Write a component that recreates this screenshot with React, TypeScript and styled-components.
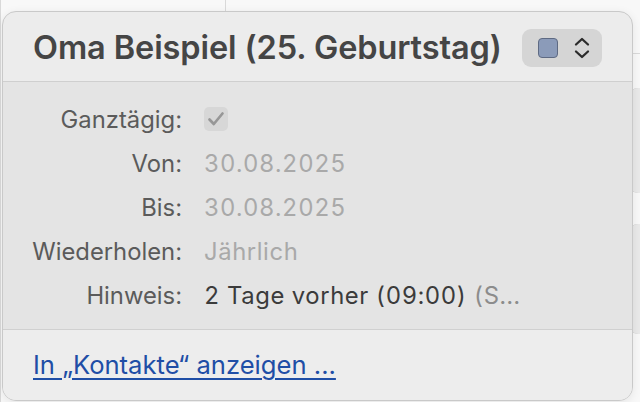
import React from "react";
import styled, { createGlobalStyle } from "styled-components";

const GlobalStyle = createGlobalStyle`
  html, body {
    margin: 0;
    padding: 0;
    background: #f7f7f7;
  }
  * {
    box-sizing: border-box;
  }
`;

const Stage = styled.div`
  position: relative;
  width: 640px;
  height: 402px;
  overflow: hidden;
  background: #f8f8f8;
  font-family: Inter, "Noto Sans", sans-serif;
`;

// calendar grid peeking out behind the popover
const GridLine = styled.div<{ $vertical?: boolean }>`
  position: absolute;
  background: #d9d9d9;
  ${(p) => (p.$vertical ? "width: 1px;" : "height: 1px;")}
`;

const EventBlock = styled.div<{ $tone: string }>`
  position: absolute;
  left: 628px;
  width: 30px;
  border-radius: 10px;
  background: ${(p) => p.$tone};
  border-left: 1px solid #c2c2c2;
`;

const Popover = styled.div`
  position: absolute;
  left: 2px;
  top: 11px;
  width: 631px;
  height: 390px;
  border: 1px solid #c9c9c9;
  border-radius: 14px;
  overflow: hidden;
  display: flex;
  flex-direction: column;
  background: #ececec;
  box-shadow: 0 2px 10px rgba(0, 0, 0, 0.08);
`;

const Header = styled.div`
  height: 70px;
  flex-shrink: 0;
  display: flex;
  align-items: center;
  justify-content: space-between;
  padding: 2px 30px 0 30px;
  border-bottom: 1px solid #cfcfcf;
`;

const Title = styled.h1`
  margin: 0;
  font-size: 32.5px;
  font-weight: 600;
  color: #454545;
  letter-spacing: -0.1px;
`;

const ColorButton = styled.div`
  width: 80px;
  height: 38px;
  border-radius: 9px;
  background: #d5d5d5;
  display: flex;
  align-items: center;
  padding-left: 16px;
  gap: 15px;
`;

const Swatch = styled.div`
  width: 20px;
  height: 20px;
  border-radius: 4px;
  background: #8b9bb9;
  border: 1.5px solid #5e6a83;
`;

const Body = styled.div`
  flex: 1;
  background: #e4e4e4;
  padding: 15px 0 0 0;
  border-bottom: 1px solid #d0d0d0;
`;

const Row = styled.div`
  height: 44px;
  display: grid;
  grid-template-columns: 179px 1fr;
  column-gap: 22px;
  align-items: center;
  font-size: 23.8px;
`;

const Label = styled.div`
  text-align: right;
  color: #5b5b5b;
`;

const Value = styled.div<{ $muted?: boolean }>`
  color: ${(p) => (p.$muted ? "#a9a9a9" : "#3b3b3b")};
  white-space: nowrap;
  font-variant-numeric: tabular-nums;
  letter-spacing: 0.6px;
`;

const Extra = styled.span`
  color: #8c8c8c;
`;

const CheckBox = styled.div`
  width: 24px;
  height: 24px;
  border-radius: 5px;
  background: #d7d7d7;
  display: flex;
  align-items: center;
  justify-content: center;
`;

const Footer = styled.div`
  height: 70px;
  flex-shrink: 0;
  display: flex;
  align-items: center;
  padding: 0 0 2px 30px;
  background: #ededed;
`;

const Link = styled.a`
  font-size: 25.6px;
  color: #1f4ea6;
  text-decoration: underline;
  text-underline-offset: 4px;
  text-decoration-thickness: 1.5px;
`;

const rows: { label: string; value: React.ReactNode; muted?: boolean }[] = [
  { label: "Von:", value: "30.08.2025", muted: true },
  { label: "Bis:", value: "30.08.2025", muted: true },
  { label: "Wiederholen:", value: "Jährlich", muted: true },
  {
    label: "Hinweis:",
    value: (
      <>
        2 Tage vorher (09:00) <Extra>(S...</Extra>
      </>
    ),
  },
];

export default function App() {
  return (
    <>
      <GlobalStyle />
      <Stage>
        <GridLine $vertical style={{ left: 225, top: 0, height: 20 }} />
        <GridLine $vertical style={{ left: 0, top: 0, height: 402 }} />
        <GridLine style={{ left: 620, top: 53, width: 20 }} />
        <EventBlock $tone="#e9e9e9" style={{ top: 88, height: 105 }} />
        <EventBlock $tone="#e9e9e9" style={{ top: 224, height: 110 }} />

        <Popover>
          <Header>
            <Title>Oma Beispiel (25. Geburtstag)</Title>
            <ColorButton>
              <Swatch />
              <svg width="18" height="24" viewBox="0 0 18 24">
                <path
                  d="M3 8.5 L9 3 L15 8.5 M3 15.5 L9 21 L15 15.5"
                  fill="none"
                  stroke="#2b2b2b"
                  strokeWidth="2.3"
                  strokeLinecap="round"
                  strokeLinejoin="round"
                />
              </svg>
            </ColorButton>
          </Header>
          <Body>
            <Row>
              <Label>Ganztägig:</Label>
              <CheckBox>
                <svg width="18" height="16" viewBox="0 0 18 16">
                  <path
                    d="M2.5 8.5 L6.8 13 L15.5 2.5"
                    fill="none"
                    stroke="#979797"
                    strokeWidth="2.7"
                    strokeLinecap="round"
                    strokeLinejoin="round"
                  />
                </svg>
              </CheckBox>
            </Row>
            {rows.map((r) => (
              <Row key={r.label}>
                <Label>{r.label}</Label>
                <Value $muted={r.muted}>{r.value}</Value>
              </Row>
            ))}
          </Body>
          <Footer>
            <Link href="#">In „Kontakte“ anzeigen ...</Link>
          </Footer>
        </Popover>
      </Stage>
    </>
  );
}
